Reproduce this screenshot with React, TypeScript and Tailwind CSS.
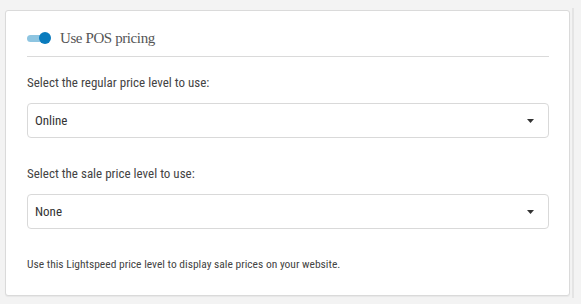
import React from "react";

function Caret() {
  return (
    <svg width="7" height="4" viewBox="0 0 7 4" className="shrink-0">
      <path d="M0 0 H7 L3.5 4 Z" fill="#333" />
    </svg>
  );
}

function SelectBox({ value }: { value: string }) {
  return (
    <div className="flex h-[35px] items-center justify-between rounded-[4px] border border-[#d9d9d9] bg-white pl-[7px] pr-[14px]">
      <span className="text-[13px] leading-[16px] text-[#333]">{value}</span>
      <Caret />
    </div>
  );
}

export default function App() {
  return (
    <div className="flex h-[304px] w-[581px] items-start bg-[#f3f3f3] pl-[5px] pt-[10px] font-['Roboto_Condensed',Roboto,sans-serif]">
      <div className="flex h-[286px] w-[565px] flex-col rounded-[3px] border border-[#dadada] bg-white pl-[21px] pr-[20px] pt-[17px] shadow-[0_1px_1px_rgba(0,0,0,0.05)]">
        <div className="flex h-[29px] items-start gap-[9px] border-b border-[#dadada]">
          <div className="relative mt-[4px] h-[12px] w-[24px] shrink-0">
            <div className="absolute left-0 top-[2.5px] h-[7px] w-[19px] rounded-full bg-[#8ec5e1]" />
            <div className="absolute left-[12px] top-0 h-[12px] w-[12px] rounded-full bg-[#0a7bbd]" />
          </div>
          <span className="font-['Liberation_Serif',serif] text-[15px] leading-[20px] tracking-[-0.4px] text-[#555]">
            Use POS pricing
          </span>
        </div>
        <div className="pt-[18px] text-[13px] leading-[16px] text-[#444]">
          Select the regular price level to use:
        </div>
        <div className="pt-[12px]">
          <SelectBox value="Online" />
        </div>
        <div className="pt-[28px] text-[13px] leading-[16px] text-[#444]">
          Select the sale price level to use:
        </div>
        <div className="pt-[12px]">
          <SelectBox value="None" />
        </div>
        <div className="pt-[27px] text-[11.5px] leading-[16px] text-[#444]">
          Use this Lightspeed price level to display sale prices on your website.
        </div>
      </div>
      <div className="ml-[2px] mt-[-2px] h-[290px] w-[2px] bg-[#e4e4e4]" />
    </div>
  );
}
